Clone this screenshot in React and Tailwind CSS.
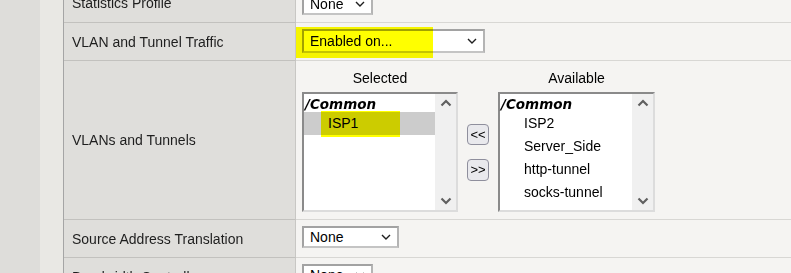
import React from "react";

const SelChevron = () => (
  <svg width="10" height="6" viewBox="0 0 10 6" className="shrink-0">
    <path d="M1 1l4 4 4-4" fill="none" stroke="#1f1f1f" strokeWidth="1.4" />
  </svg>
);

const ScrollUp = () => (
  <svg width="12" height="8" viewBox="0 0 12 8">
    <path d="M1.5 6.5L6 2l4.5 4.5" fill="none" stroke="#606060" strokeWidth="2.2" />
  </svg>
);

const ScrollDown = () => (
  <svg width="12" height="8" viewBox="0 0 12 8">
    <path d="M1.5 1.5L6 6l4.5-4.5" fill="none" stroke="#606060" strokeWidth="2.2" />
  </svg>
);

function Select({ value, w, h }) {
  return (
    <div
      className={`${w} ${h} border-2 border-t-[#a2a2a2] border-l-[#a2a2a2] border-r-[#b4b4b4] border-b-[#c4c4c4] bg-white flex items-center justify-between pl-[6px] pr-[6px] text-[14px] text-black`}
    >
      <span className="leading-none">{value}</span>
      <SelChevron />
    </div>
  );
}

function ListBox({ items, selected, highlight }) {
  return (
    <div className="h-[120px] w-full border-2 border-t-[#8a8a8a] border-l-[#8a8a8a] border-r-[#dcdcdc] border-b-[#dcdcdc] bg-white flex">
      <div className="flex-1 flex flex-col">
        <div className="h-[18px] pl-[1px] leading-[21px] text-[13.5px] font-bold italic font-['DejaVu_Sans',Verdana,sans-serif] text-black">
          /Common
        </div>
        {items.map((it) => (
          <div
            key={it}
            className={`relative h-[23px] leading-[23px] pl-[24px] text-[14px] text-black ${
              it === selected ? "bg-[#cccccc]" : ""
            }`}
          >
            {it}
            {highlight && it === selected && (
              <div className="absolute left-[17px] top-[-1px] w-[79px] h-[26px] bg-[#ffff00] mix-blend-multiply pointer-events-none" />
            )}
          </div>
        ))}
      </div>
      <div className="w-[21px] bg-[#f0f0f0] flex flex-col items-center justify-between pt-[5px] pb-[5px]">
        <ScrollUp />
        <ScrollDown />
      </div>
    </div>
  );
}

function Row({ label, h, children, valueClass = "" }) {
  return (
    <div className={`flex ${h} shrink-0`}>
      <div className="w-[232px] shrink-0 bg-[#dfdedb] border-r border-r-[#c8c7c4] border-b border-b-[#c2c1be] pl-[8px] flex items-center">
        <span className="text-[14px] text-[#1e1e1e] leading-none whitespace-nowrap">{label}</span>
      </div>
      <div className={`relative flex-1 border-b border-b-[#d8d7d4] pl-[6px] ${valueClass}`}>
        {children}
      </div>
    </div>
  );
}

export default function App() {
  return (
    <div className="w-[791px] h-[273px] overflow-hidden flex bg-[#f5f4f2] font-['Liberation_Sans',Arial,sans-serif]">
      <div className="w-[40px] shrink-0 bg-[#dedddA]" />
      <div className="w-[24px] shrink-0 bg-[#e9e8e4] border-r border-r-[#a5a5a5]" />
      <div className="flex-1 flex flex-col mt-[-16px]">
        <Row label="Statistics Profile" h="h-[39px]" valueClass="pt-[8px]">
          <Select value="None" w="w-[71px]" h="h-[23px]" />
        </Row>
        <Row label="VLAN and Tunnel Traffic" h="h-[38px]" valueClass="pt-[6px]">
          <Select value="Enabled on..." w="w-[183px]" h="h-[24px]" />
          <div className="absolute left-0 top-[4px] w-[137px] h-[31px] bg-[#ffff00] mix-blend-multiply pointer-events-none" />
        </Row>
        <Row label="VLANs and Tunnels" h="h-[159px]" valueClass="pt-[9px]">
          <div className="flex items-start">
            <div className="w-[156px] flex flex-col items-center">
              <div className="h-[17px] leading-[17px] text-[14px] text-black mb-[5px]">Selected</div>
              <ListBox items={["ISP1"]} selected="ISP1" highlight />
            </div>
            <div className="w-[40px] h-[120px] mt-[22px] flex flex-col items-center justify-center gap-[14px]">
              <div className="w-[22px] h-[21px] rounded-[4px] border border-[#8f8f9d] bg-[#e9e9ed] flex items-center justify-center text-[13px] leading-none text-black">
                &lt;&lt;
              </div>
              <div className="w-[22px] h-[22px] rounded-[4px] border border-[#8f8f9d] bg-[#e9e9ed] flex items-center justify-center text-[13px] leading-none text-black">
                &gt;&gt;
              </div>
            </div>
            <div className="w-[157px] flex flex-col items-center">
              <div className="h-[17px] leading-[17px] text-[14px] text-black mb-[5px]">Available</div>
              <ListBox items={["ISP2", "Server_Side", "http-tunnel", "socks-tunnel"]} />
            </div>
          </div>
        </Row>
        <Row label="Source Address Translation" h="h-[38px]" valueClass="pt-[6px]">
          <Select value="None" w="w-[97px]" h="h-[22px]" />
        </Row>
        <Row label="Bandwidth Controller" h="h-[38px]" valueClass="pt-[6px]">
          <Select value="None" w="w-[71px]" h="h-[22px]" />
        </Row>
      </div>
    </div>
  );
}
